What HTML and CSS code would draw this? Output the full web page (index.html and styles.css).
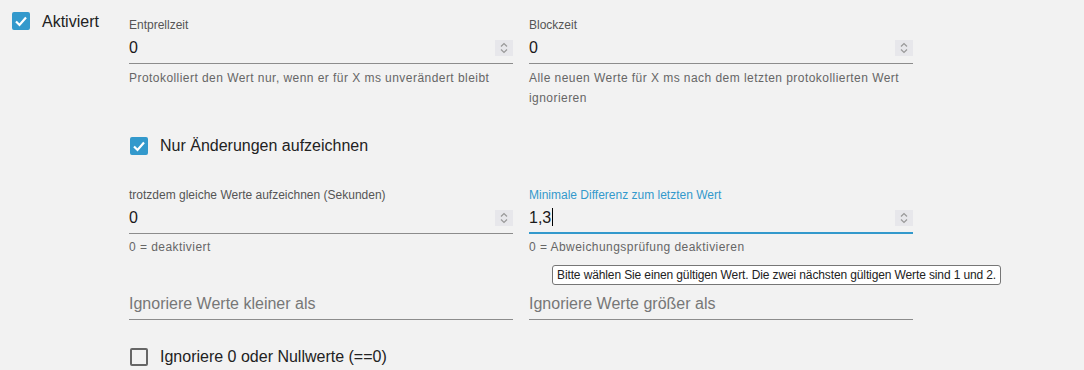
FILE: index.html
```html
<!DOCTYPE html>
<html lang="de">
<head>
    <meta charset="UTF-8">
    <meta name="viewport" content="width=device-width, initial-scale=1.0">
    <title>Einstellungen</title>
    <link rel="stylesheet" href="styles.css">
</head>
<body>
    <div class="settings">
        <div class="enable">
            <span class="box checked">
                <svg viewBox="0 0 18 18" width="18" height="18"><polyline points="4,9.5 7.5,13 14,5.5" fill="none" stroke="#fff" stroke-width="2.2"/></svg>
            </span>
            <span class="enable-label">Aktiviert</span>
        </div>

        <div class="options">
            <div class="row first">
                <div class="field">
                    <div class="label">Entprellzeit</div>
                    <div class="input">
                        <span class="value">0</span>
                        <span class="spin"><svg viewBox="0 0 18 16" width="18" height="16"><polyline points="6,6.5 9,3.5 12,6.5" fill="none" stroke="#999" stroke-width="1.2"/><polyline points="6,9.5 9,12.5 12,9.5" fill="none" stroke="#999" stroke-width="1.2"/></svg></span>
                    </div>
                    <div class="helper">Protokolliert den Wert nur, wenn er für X ms unverändert bleibt</div>
                </div>
                <div class="field">
                    <div class="label">Blockzeit</div>
                    <div class="input">
                        <span class="value">0</span>
                        <span class="spin"><svg viewBox="0 0 18 16" width="18" height="16"><polyline points="6,6.5 9,3.5 12,6.5" fill="none" stroke="#999" stroke-width="1.2"/><polyline points="6,9.5 9,12.5 12,9.5" fill="none" stroke="#999" stroke-width="1.2"/></svg></span>
                    </div>
                    <div class="helper">Alle neuen Werte für X ms nach dem letzten protokollierten Wert ignorieren</div>
                </div>
            </div>

            <div class="check-row changes">
                <span class="box checked">
                    <svg viewBox="0 0 18 18" width="18" height="18"><polyline points="4,9.5 7.5,13 14,5.5" fill="none" stroke="#fff" stroke-width="2.2"/></svg>
                </span>
                <span class="check-label">Nur Änderungen aufzeichnen</span>
            </div>

            <div class="row second">
                <div class="field">
                    <div class="label">trotzdem gleiche Werte aufzeichnen (Sekunden)</div>
                    <div class="input">
                        <span class="value">0</span>
                        <span class="spin"><svg viewBox="0 0 18 16" width="18" height="16"><polyline points="6,6.5 9,3.5 12,6.5" fill="none" stroke="#999" stroke-width="1.2"/><polyline points="6,9.5 9,12.5 12,9.5" fill="none" stroke="#999" stroke-width="1.2"/></svg></span>
                    </div>
                    <div class="helper">0 = deaktiviert</div>
                </div>
                <div class="field focused">
                    <div class="label">Minimale Differenz zum letzten Wert</div>
                    <div class="input">
                        <span class="value">1,3<span class="caret"></span></span>
                        <span class="spin"><svg viewBox="0 0 18 16" width="18" height="16"><polyline points="6,6.5 9,3.5 12,6.5" fill="none" stroke="#999" stroke-width="1.2"/><polyline points="6,9.5 9,12.5 12,9.5" fill="none" stroke="#999" stroke-width="1.2"/></svg></span>
                    </div>
                    <div class="helper">0 = Abweichungsprüfung deaktivieren</div>
                    <div class="bubble">Bitte wählen Sie einen gültigen Wert. Die zwei nächsten gültigen Werte sind 1 und 2.</div>
                </div>
            </div>

            <div class="row third">
                <div class="field empty">
                    <div class="label"></div>
                    <div class="input">
                        <span class="placeholder">Ignoriere Werte kleiner als</span>
                    </div>
                </div>
                <div class="field empty">
                    <div class="label"></div>
                    <div class="input">
                        <span class="placeholder">Ignoriere Werte größer als</span>
                    </div>
                </div>
            </div>

            <div class="check-row zeros">
                <span class="box"></span>
                <span class="check-label">Ignoriere 0 oder Nullwerte (==0)</span>
            </div>
        </div>
    </div>
</body>
</html>
```

FILE: styles.css
```css
/* Einstellungen */
body {
    margin: 0;
    background-color: #f2f2f2;
    font-family: "Liberation Sans", Arial, sans-serif;
    color: #1a1a1a;
}
.settings {
    display: flex;
    align-items: flex-start;
    padding: 12px 0 0 12px;
}
.enable {
    width: 117px;
    display: flex;
    align-items: center;
    gap: 12px;
    height: 18px;
}
.enable-label {
    font-size: 16px;
    color: #222;
    padding-top: 2px;
}
.box {
    display: block;
    width: 18px;
    height: 18px;
    box-sizing: border-box;
    border: 2px solid #666;
    border-radius: 2px;
    flex-shrink: 0;
}
.box svg {
    display: block;
    margin: -2px;
}
.box.checked {
    border-color: #3399cc;
    background-color: #3399cc;
}
.options {
    width: 784px;
}
.row {
    display: grid;
    grid-template-columns: 384px 384px;
    column-gap: 16px;
    align-items: start;
}
.row.first {
    margin-top: 6px;
}
.row.second {
    margin-top: 33px;
}
.row.third {
    margin-top: 17px;
}
.field {
    position: relative;
}
.label {
    font-size: 12px;
    line-height: 14px;
    height: 14px;
    color: #555;
}
.input {
    display: flex;
    align-items: center;
    justify-content: space-between;
    padding: 4px 0 3px;
    border-bottom: 1px solid #8c8c8c;
}
.value,
.placeholder {
    font-size: 16px;
    line-height: 24px;
}
.placeholder {
    color: #777;
}
.spin {
    display: block;
    width: 18px;
    height: 16px;
    background-color: #e7e7eb;
}
.spin svg {
    display: block;
}
.caret {
    display: inline-block;
    width: 1px;
    height: 18px;
    margin-left: 1px;
    background-color: #000;
    vertical-align: -3px;
}
.helper {
    margin-top: 3px;
    font-size: 12px;
    line-height: 20px;
    letter-spacing: 0.45px;
    color: #666;
}
.first .helper {
    margin-top: 4px;
}
.focused .label {
    color: #3399cc;
}
.focused .input {
    border-bottom: 2px solid #3399cc;
    padding-bottom: 2px;
}
.check-row {
    display: flex;
    align-items: center;
    gap: 12px;
    margin-left: 1px;
    height: 18px;
}
.check-row.changes {
    margin-top: 29px;
}
.check-row.zeros {
    margin-top: 28px;
}
.check-label {
    font-size: 16px;
    color: #222;
}
.bubble {
    position: absolute;
    top: 77px;
    left: 23px;
    padding: 1px 4px;
    font-size: 12px;
    line-height: 16px;
    letter-spacing: -0.12px;
    white-space: nowrap;
    color: #222;
    background-color: #fff;
    border: 1px solid #767676;
    border-radius: 3px;
}
```
